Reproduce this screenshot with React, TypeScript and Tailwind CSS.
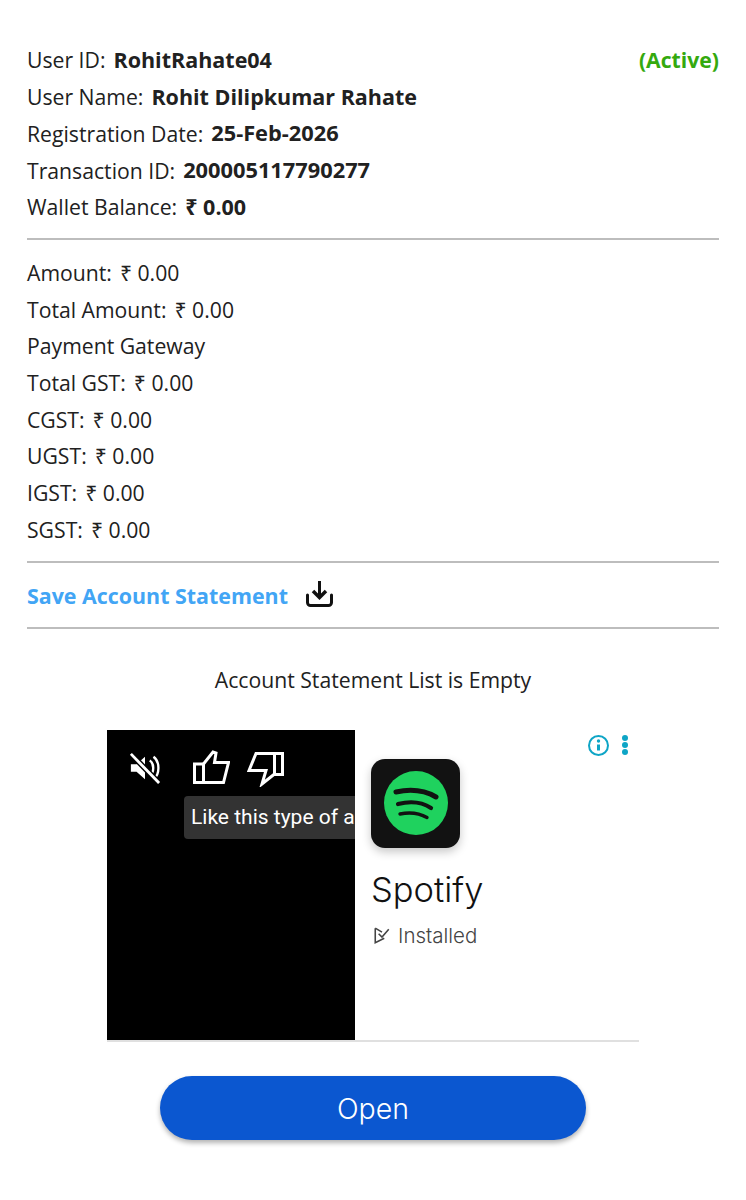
const Rupee = () => <span className="font-['Noto_Sans','DejaVu_Sans',sans-serif]">₹</span>;

const Row = ({ label, children }: { label: string; children: React.ReactNode }) => (
  <div className="flex h-[36.7px] items-center gap-[8px]">
    <span>{label}</span>
    <span>{children}</span>
  </div>
);

const Bold = ({ children }: { children: React.ReactNode }) => <span className="text-[21.5px] font-bold">{children}</span>;

const amounts = ["Amount:", "Total Amount:"];
const taxes = ["Total GST:", "CGST:", "UGST:", "IGST:", "SGST:"];

const MutedIcon = () => (
  <svg width="32" height="32" viewBox="0 0 34 34" fill="none">
    <path d="M2 13h6l9-8v24l-9-8H2z" fill="#fff" />
    <path d="M22 9c5 3 5 13 0 16M26 5c7 5 7 19 0 24" stroke="#fff" strokeWidth="2.5" />
    <path d="M2 2l30 31" stroke="#000" strokeWidth="6" />
    <path d="M2 2l30 31" stroke="#fff" strokeWidth="3" />
  </svg>
);

const ThumbUp = () => (
  <svg width="37" height="35" viewBox="0 0 37 35" fill="none" stroke="#fff" strokeWidth="3">
    <path d="M1.500 15h9v18.500h-9z" />
    <path d="M10.500 15L20 3l3 1-1.500 9.500H35.500L30.500 33.500H10.500" />
  </svg>
);

const ThumbDown = () => (
  <svg width="37" height="35" viewBox="0 0 37 35" fill="none" stroke="#fff" strokeWidth="3">
    <path d="M27.500 1.500h8v21h-8z" />
    <path d="M27.500 1.500H9L2 18.500H19L15 32l12.500-10" />
  </svg>
);

const SpotifyIcon = () => (
  <div className="flex h-[89px] w-[89px] items-center justify-center rounded-[14px] bg-[#121212] shadow-[0_4px_10px_rgba(0,0,0,0.22)]">
    <svg width="64" height="64" viewBox="0 0 64 64" fill="none" strokeLinecap="round">
      <circle cx="32" cy="32" r="32" fill="#1fd25e" />
      <path d="M12 21c14-3 28-2 40 5" stroke="#121212" strokeWidth="5" />
      <path d="M14 33c12-3 24-2 33 4" stroke="#121212" strokeWidth="4.2" />
      <path d="M16 43c10-2 19-1 27 3.500" stroke="#121212" strokeWidth="3.400" />
    </svg>
  </div>
);

export default function App() {
  return (
    <div className="min-h-[1200px] bg-white px-[27px] pt-[42px] font-['Open_Sans',sans-serif] text-[21.2px] text-[#212121]">
      <div className="relative">
        <Row label="User ID:"><Bold>RohitRahate04</Bold></Row>
        <span className="absolute right-0 top-0 flex h-[36.7px] items-center font-bold text-[#34a90e]">(Active)</span>
        <Row label="User Name:"><Bold>Rohit Dilipkumar Rahate</Bold></Row>
        <Row label="Registration Date:"><span className="text-[21.8px] font-bold">25-Feb-2026</span></Row>
        <Row label="Transaction ID:"><span className="text-[21.8px] font-bold">200005117790277</span></Row>
        <Row label="Wallet Balance:"><Bold><Rupee /> 0.00</Bold></Row>
      </div>

      <div className="mb-[14px] mt-[13px] h-[2px] bg-[#bdbdbd]" />

      {amounts.map((a) => (
        <Row key={a} label={a}><Rupee /> 0.00</Row>
      ))}
      <div className="flex h-[36.7px] items-center">Payment Gateway</div>
      {taxes.map((t) => (
        <Row key={t} label={t}><Rupee /> 0.00</Row>
      ))}

      <div className="mt-[13px] h-[2px] bg-[#bdbdbd]" />
      <div className="flex h-[64px] items-center gap-[18px]">
        <span className="mt-[2px] text-[21.4px] font-bold text-[#42a5f5]">Save Account Statement</span>
        <svg width="27" height="27" viewBox="0 0 27 27" fill="none" stroke="#111" strokeWidth="3">
          <path d="M13.500 0v16" />
          <path d="M7 10l6.500 6.500L20 10" strokeWidth="3.500" />
          <path d="M1.500 14v7.500a3 3 0 0 0 3 3h18a3 3 0 0 0 3-3V14" strokeLinecap="round" />
        </svg>
      </div>
      <div className="h-[2px] bg-[#bdbdbd]" />

      <p className="mt-[37px] text-center leading-[28px]">Account Statement List is Empty</p>

      <div className="mx-auto mt-[36px] flex h-[312px] w-[532px] border-b-2 border-[#e0e0e0]">
        <div className="relative w-[248px] bg-black">
          <div className="absolute left-[22px] top-[22px]"><MutedIcon /></div>
          <div className="absolute left-[86px] top-[19px]"><ThumbUp /></div>
          <div className="absolute left-[140px] top-[22px]"><ThumbDown /></div>
          <div className="absolute left-[77px] right-0 top-[66px] flex h-[43px] items-center overflow-hidden whitespace-nowrap rounded-l-[4px] bg-[#333] pl-[7px] font-['Roboto',sans-serif] text-[21px] text-white">
            Like this type of a
          </div>
        </div>
        <div className="relative flex-1 pl-[16px] pt-[29px] font-['Inter',sans-serif]">
          <div className="absolute right-[11px] top-[5px] flex items-center gap-[13px]">
            <svg width="21" height="21" viewBox="0 0 21 21" fill="none" stroke="#0ea5c6" strokeWidth="2">
              <circle cx="10.500" cy="10.500" r="9.500" />
              <path d="M10.500 9.500v6" strokeWidth="3" />
              <circle cx="10.500" cy="6" r="1.700" fill="#0ea5c6" stroke="none" />
            </svg>
            <div className="flex flex-col gap-[1px]">
              <span className="h-[6px] w-[6px] rounded-full bg-[#0ea5c6]" />
              <span className="h-[6px] w-[6px] rounded-full bg-[#0ea5c6]" />
              <span className="h-[6px] w-[6px] rounded-full bg-[#0ea5c6]" />
            </div>
          </div>
          <SpotifyIcon />
          <div className="mt-[19px] text-[34.5px] font-light leading-[46px] text-[#111]">Spotify</div>
          <div className="mt-[11px] flex items-center gap-[7px] text-[20.5px] font-light leading-[24px] text-[#444]">
            <svg className="ml-[2px]" width="18" height="18" viewBox="0 0 16 16" fill="none" stroke="#444" strokeWidth="1.400">
              <path d="M2 1v13l8-4M2 1l6 3.500" />
              <path d="M5 6l3 3 6-7" />
            </svg>
            Installed
          </div>
        </div>
      </div>

      <button className="mx-auto mt-[34px] flex h-[64px] w-[426px] items-center justify-center rounded-full bg-[#0b57d0] pt-[2px] font-['Inter',sans-serif] text-[28.5px] font-light text-white shadow-[0_3px_5px_rgba(0,0,0,0.3)]">
        Open
      </button>
    </div>
  );
}
